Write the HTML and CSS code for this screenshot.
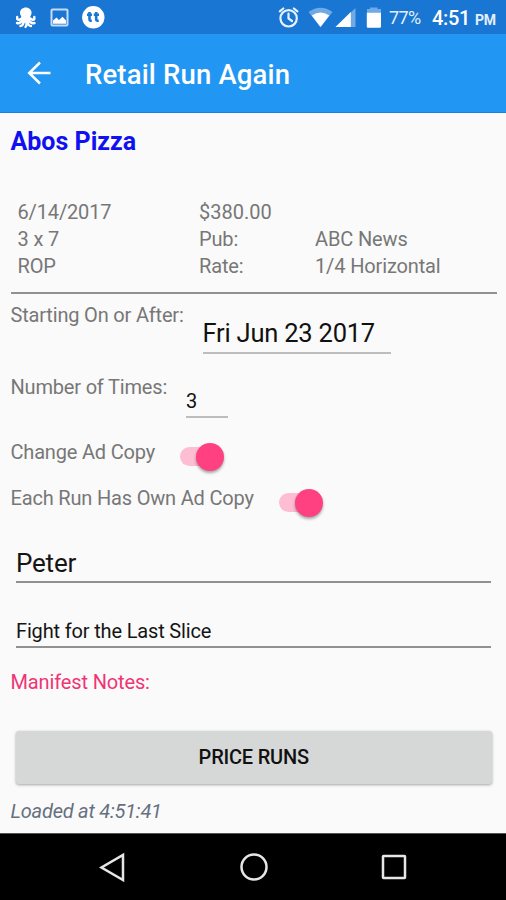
FILE: index.html
```html
<!DOCTYPE html>
<html lang="en">
<head>
<meta charset="utf-8">
<title>Retail Run Again</title>
<link rel="stylesheet" href="styles.css">
</head>
<body>
<div class="screen">
  <div class="status">
    <svg class="status-left" width="110" height="34" viewBox="0 0 110 34">
      <g fill="none" stroke="#fff" stroke-width="2.4" stroke-linecap="round">
        <path d="M22 18Q19 21 17.2 19V17M23 20Q20 24 17 23M24 21Q23 26 20.5 26M29.500 18Q33 21 34.300 19V17M28.500 20Q31 24 34.500 23M27.500 21Q28 26 31 26M26 21Q27.500 25 25.500 27"/>
      </g>
      <path fill="#fff" d="M25.800 7.500C22.500 7.500 20 9.800 20 12.800C20 15.200 21.500 16 21.500 18V22.500H30V18C30 16 31.600 15.200 31.600 12.800C31.600 9.800 29.100 7.500 25.800 7.500Z"/>
      <rect x="51.500" y="9.500" width="16" height="16" rx="1" fill="none" stroke="#c5dcf7" stroke-width="2"/>
      <path fill="#fff" d="M53 23.800V20.500L56.500 17.500L59 20L62.500 16.800L66 20.500V23.800Z"/>
      <circle cx="93.300" cy="17.300" r="11.200" fill="#fff"/>
      <path d="M89.500 12V19.200Q89.500 21 91.800 20.800M87 14.800H92M96.200 12V19.200Q96.200 21 98.700 20.800M93.800 14.800H99" fill="none" stroke="#1976d2" stroke-width="2.600"/>
    </svg>
    <svg class="status-right" width="105" height="34" viewBox="278 0 105 34">
      <g fill="none" stroke="#e8f2fd" stroke-width="2.2" stroke-linecap="round">
        <circle cx="288.600" cy="18.300" r="8.200"/>
        <path d="M279.800 11.300L283.300 8.500M297.400 11.300L293.900 8.500M288.500 13.500V18.500L292 21"/>
      </g>
      <path fill="#6fa9e6" d="M308.500 12Q320.500 3.500 332.500 12L320.500 27.300Z"/>
      <path fill="#fff" d="M311.800 15.600Q320.500 9.500 329.300 15.600L320.500 27Z"/>
      <path fill="#6fa9e6" d="M335.500 27L355.500 8V27Z"/>
      <path fill="#fff" d="M335.500 27L350.800 12V27Z"/>
      <path fill="#6fa9e6" d="M367 9H370V7.500H377.500V9H381V14H367Z"/>
      <path fill="#fff" d="M366.800 12.800H381V26.500Q381 27.800 379.700 27.800H368.100Q366.800 27.800 366.800 26.500Z"/>
    </svg>
    <span class="battery">77%</span>
    <span class="clock">4:51</span><span class="pm">PM</span>
  </div>
  <header class="toolbar">
    <svg width="24" height="24" viewBox="0 0 24 24" fill="none" stroke="#fff" stroke-width="2.500"><path d="M23.500 12H2.500M13 1.500L2.200 12L13 22.500"/></svg>
    <h1 class="title">Retail Run Again</h1>
  </header>
  <main class="content">
    <h2 class="company">Abos Pizza</h2>
    <div class="details">
      <span class="t-date">6/14/2017</span><span class="t-price">$380.00</span><span></span>
      <span>3 x 7</span><span>Pub:</span><span class="t-news">ABC News</span>
      <span>ROP</span><span>Rate:</span><span class="t-rate">1/4 Horizontal</span>
    </div>
    <div class="row row-date">
      <span class="label l-start">Starting On or After:</span>
      <span class="field date">Fri Jun 23 2017</span>
    </div>
    <div class="row row-times">
      <span class="label l-times">Number of Times:</span>
      <span class="field times">3</span>
    </div>
    <div class="row row-copy">
      <span class="label l-copy">Change Ad Copy</span>
      <span class="switch"><span class="knob"></span></span>
    </div>
    <div class="row row-own">
      <span class="label l-own">Each Run Has Own Ad Copy</span>
      <span class="switch"><span class="knob"></span></span>
    </div>
    <div class="input peter"><span>Peter</span></div>
    <div class="input slice"><span>Fight for the Last Slice</span></div>
    <div class="notes"><span>Manifest Notes:</span></div>
    <button class="price">PRICE RUNS</button>
    <div class="loaded"><span>Loaded at 4:51:41</span></div>
  </main>
  <nav class="nav">
    <svg width="28" height="30" viewBox="0 0 28 30"><path d="M24 3V28L2.500 15.500Z"/></svg>
    <svg width="30" height="30" viewBox="0 0 30 30"><circle cx="15" cy="15" r="12.500"/></svg>
    <svg width="30" height="30" viewBox="0 0 30 30"><rect x="4" y="4" width="22" height="22" rx=".5"/></svg>
  </nav>
</div>
</body>
</html>
```
FILE: styles.css
```css
* { box-sizing: border-box; }
body { margin: 0; font-family: Roboto, "Liberation Sans", sans-serif; font-size: 20px; color: #777; }
.screen { width: 506px; height: 900px; display: flex; flex-direction: column; background: #fafafa; overflow: hidden; }
.status { height: 34px; background: #1976d2; color: #fff; display: flex; line-height: 36px; white-space: nowrap; flex: none; }
.status svg { flex: none; }
.status-right { margin-left: 168px; }
.battery { margin-left: 6px; width: 43px; font-size: 18px; letter-spacing: -.6px; color: #e3effc; }
.clock { width: 43px; font-size: 20px; font-weight: 500; letter-spacing: -.3px; }
.pm { font-size: 14px; font-weight: 700; line-height: 40px; letter-spacing: -.3px; color: #e3effc; }
.toolbar { height: 79px; flex: none; background: #2196f3; border-bottom: 1px solid #1383e0; display: flex; align-items: center; padding: 0 0 0 27px; }
.title { margin: 3px 0 0 34px; color: #fff; font-size: 27.5px; font-weight: 500; letter-spacing: .16px; line-height: 32px; white-space: nowrap; }
.content { flex: 1; padding: 14px 9px 0 10.5px; display: flex; flex-direction: column; }
.company { margin: 0; color: #1010f0; font-size: 25px; font-weight: 700; line-height: 30px; }
.details { margin-top: 42px; padding: 0 0 12px 7px; border-bottom: 2px solid #919191; display: grid; grid-template-columns: 181.5px 116px 1fr; line-height: 27px; letter-spacing: -.14px; white-space: nowrap; }
.t-price { letter-spacing: 0; }
.row { display: flex; align-items: flex-start; white-space: nowrap; }
.label { line-height: 24px; letter-spacing: -.18px; }
.field { color: #111; border-bottom: 2px solid #bdbdbd; }
.row-date { height: 72px; padding-top: 9px; }
.date { font-size: 25.5px; letter-spacing: -.22px; line-height: 32px; width: 188px; margin: 14px 0 0 19px; height: 37px; }
.row-times { height: 71px; padding-top: 9px; }
.times { line-height: 24px; height: 29px; width: 42px; margin: 14px 0 0 18.5px; }
.l-start { width: 173px; }
.l-times { width: 157px; }
.l-copy { width: 169px; }
.l-own { width: 268px; }
.row-copy { height: 46px; padding-top: 3px; }
.row-own { height: 50px; padding-top: 3px; }
.switch { width: 40px; height: 19px; margin-top: 7px; border-radius: 10px; background: #fdbdd3; display: flex; align-items: center; }
.knob { width: 28px; height: 28px; flex: none; margin-left: 16px; border-radius: 50%; background: #ff4081; box-shadow: 0 2px 3px rgba(0,0,0,.35); }
.input { color: #151515; border-bottom: 2px solid #919191; margin: 0 6px 0 5.5px; white-space: nowrap; }
.peter { font-size: 26px; letter-spacing: -.2px; line-height: 32px; height: 36px; margin-top: 14px; }
.slice { font-size: 20px; letter-spacing: -.16px; line-height: 24px; height: 29px; margin-top: 36px; }
.notes { color: #f03476; line-height: 24px; letter-spacing: -.14px; margin-top: 22px; }
.price { margin: 37px 5px 0 5px; height: 53px; flex: none; border: 0; border-radius: 3px; background: #d6d8d7; color: #111; font: 500 20px/53px Roboto, sans-serif; letter-spacing: -.2px; padding: 0; box-shadow: 0 1px 3px rgba(0,0,0,.35); }
.loaded { margin-top: 15px; line-height: 24px; letter-spacing: -.22px; font-style: italic; color: #667080; }
.nav { height: 67px; flex: none; background: #000; display: flex; align-items: center; padding-left: 99px; gap: 111.5px; border-top: 1px solid #555; }
.nav svg { fill: none; stroke: #e6e6e6; stroke-width: 2.5; }
.nav svg:last-child { margin-left: -1.5px; }
```
